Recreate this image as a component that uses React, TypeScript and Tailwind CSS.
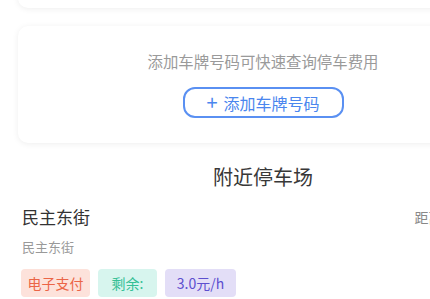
import React from 'react'

const font = { fontFamily: '"Noto Sans CJK SC", "Noto Sans", sans-serif' }

export default function App() {
  return (
    <div className="w-[430px] h-[299px] overflow-hidden bg-white" style={font}>
      <div className="w-[526px]">
        {/* previous card, mostly scrolled out */}
        <div className="mx-[18px] -mt-[40px] h-[48px] rounded-[10px] bg-white shadow-[0_1px_6px_rgba(0,0,0,0.07)]" />

        {/* plate card */}
        <div className="mx-[18px] mt-[18px] h-[117px] rounded-[10px] bg-white shadow-[0_1px_6px_rgba(0,0,0,0.07)] flex flex-col items-center pt-[23px]">
          <p className="text-[15.4px] leading-[24px] text-[#9a9a9a]">添加车牌号码可快速查询停车费用</p>
          <button className="mt-[14px] w-[161px] h-[31px] rounded-[12px] border-2 border-[#5a90f2] text-[#4a86ee] text-[16px] leading-none flex items-center justify-center gap-[6px]">
            <span className="text-[20px] leading-none -mt-[2px]">+</span>
            <span>添加车牌号码</span>
          </button>
        </div>

        {/* nearby */}
        <h2 className="mt-[20px] text-center text-[20px] leading-[28px] font-normal text-[#383838]">附近停车场</h2>

        <div className="px-[22px] mt-[14px]">
          <div className="flex items-center justify-between">
            <span className="text-[17px] leading-[24px] text-[#333]">民主东街</span>
            <span className="text-[14px] leading-[24px] text-[#888] mr-[22px]">距离 500m</span>
          </div>
          <p className="mt-[8px] text-[13px] leading-[20px] text-[#999]">民主东街</p>
          <div className="mt-[12px] flex gap-[8px] -ml-[1px]">
            <span className="w-[69px] h-[28px] rounded-[4px] bg-[#fde2db] text-[#eb6547] text-[14px] flex items-center justify-center">电子支付</span>
            <span className="w-[59px] h-[28px] rounded-[4px] bg-[#d7f5ee] text-[#35c096] text-[14px] flex items-center justify-center">剩余:</span>
            <span className="w-[71px] h-[28px] rounded-[4px] bg-[#e3def7] text-[#5d4fcf] text-[14px] flex items-center justify-center">3.0元/h</span>
          </div>
        </div>
      </div>
    </div>
  )
}
